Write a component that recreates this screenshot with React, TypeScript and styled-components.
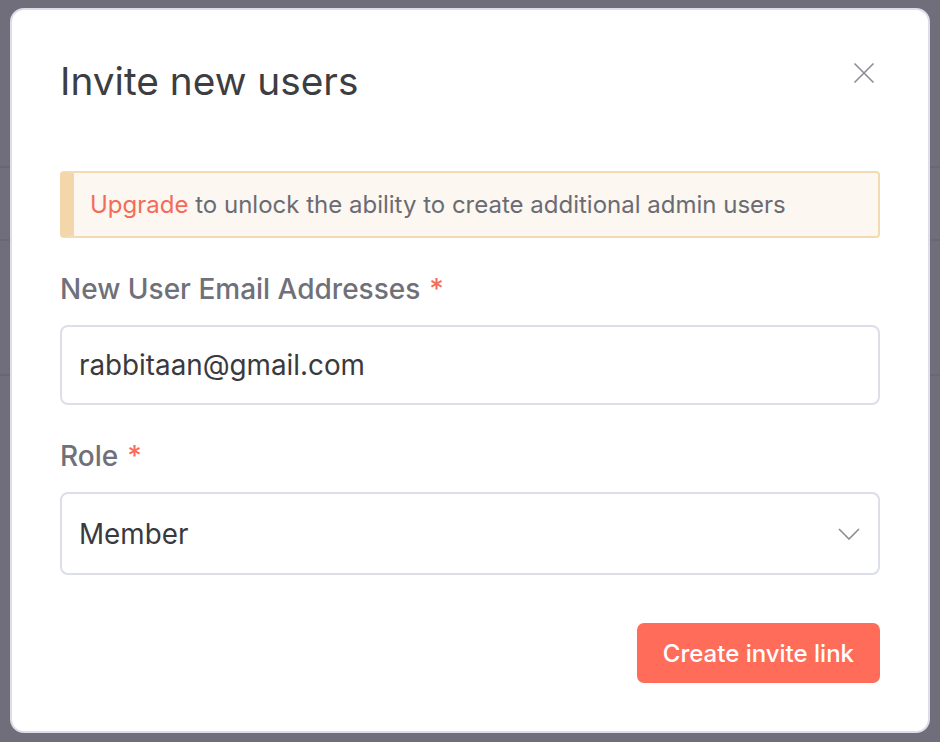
import { createGlobalStyle } from 'styled-components';
import styled from 'styled-components';

const GlobalStyle = createGlobalStyle`
  html, body {
    margin: 0;
    padding: 0;
    background: #716e7c;
  }
  body {
    font-family: Inter, "Noto Sans", sans-serif;
  }
  * {
    box-sizing: border-box;
  }
`;

const Backdrop = styled.div`
  position: relative;
  width: 940px;
  height: 742px;
  padding: 8px 10px;
  background: #716e7c;
  overflow: hidden;
`;

const BackdropLine = styled.div<{ $top: number }>`
  position: absolute;
  left: 0;
  right: 0;
  top: ${({ $top }) => $top}px;
  height: 2px;
  background: #6a6775;
`;

const Modal = styled.div`
  position: relative;
  width: 920px;
  height: 725px;
  background: #ffffff;
  border: 2px solid #dcdde9;
  border-radius: 14px;
  padding: 47px 48px 48px;
  display: flex;
  flex-direction: column;
`;

const Header = styled.div`
  display: flex;
  align-items: flex-start;
  justify-content: space-between;
`;

const Title = styled.h2`
  margin: 0;
  font-size: 38.8px;
  line-height: 48px;
  font-weight: 400;
  color: #3d3d42;
`;

const CloseButton = styled.button`
  margin-top: 4px;
  margin-right: 4px;
  width: 24px;
  height: 24px;
  padding: 0;
  border: none;
  background: transparent;
  display: flex;
  align-items: center;
  justify-content: center;
  cursor: pointer;
`;

const Alert = styled.div`
  margin-top: 66px;
  height: 67px;
  display: flex;
  align-items: center;
  background: #fcf7f0;
  border: 2px solid #f4dab0;
  border-left: 14px solid #f4d6ab;
  border-radius: 4px;
  padding-left: 16px;
  font-size: 24px;
  color: #6b6b74;
`;

const UpgradeLink = styled.span`
  color: #f56b5a;
`;

const Label = styled.label<{ $gap: number }>`
  display: block;
  margin-top: ${({ $gap }) => $gap}px;
  font-size: 28px;
  line-height: 30px;
  font-weight: 500;
  color: #707079;
`;

const Required = styled.span`
  color: #fb6b59;
  margin-left: 9px;
`;

const Field = styled.div<{ $height: number }>`
  margin-top: 21px;
  height: ${({ $height }) => $height}px;
  border: 2px solid #dcdee9;
  border-radius: 8px;
  display: flex;
  align-items: center;
  justify-content: space-between;
  padding: 0 18px 0 17px;
  font-size: 27.8px;
  color: #3a3a3e;
`;

const Footer = styled.div`
  margin-top: auto;
  display: flex;
  justify-content: flex-end;
`;

const PrimaryButton = styled.button`
  height: 60px;
  padding: 0 26px;
  border: none;
  border-radius: 7px;
  background: #ff6d5a;
  color: #ffffff;
  font-family: inherit;
  font-size: 24px;
  font-weight: 500;
  cursor: pointer;
`;

export default function App() {
  return (
    <>
      <GlobalStyle />
      <Backdrop>
        <BackdropLine $top={166} />
        <BackdropLine $top={239} />
        <BackdropLine $top={374} />
        <Modal>
          <Header>
            <Title>Invite new users</Title>
            <CloseButton aria-label="Close">
              <svg width="22" height="22" viewBox="0 0 22 22" fill="none" stroke="#8c8c94" strokeWidth="1.6">
                <path d="M1.5 1.5L20.5 20.5M20.5 1.5L1.5 20.5" />
              </svg>
            </CloseButton>
          </Header>

          <Alert>
            <span>
              <UpgradeLink>Upgrade</UpgradeLink> to unlock the ability to create additional admin users
            </span>
          </Alert>

          <Label $gap={36}>
            New User Email Addresses<Required>*</Required>
          </Label>
          <Field $height={80}>rabbitaan@gmail.com</Field>

          <Label $gap={36}>
            Role<Required>*</Required>
          </Label>
          <Field $height={83}>
            <span>Member</span>
            <svg width="22" height="12" viewBox="0 0 22 12" fill="none" stroke="#8c8c94" strokeWidth="1.6">
              <path d="M1 1L11 11L21 1" />
            </svg>
          </Field>

          <Footer>
            <PrimaryButton>Create invite link</PrimaryButton>
          </Footer>
        </Modal>
      </Backdrop>
    </>
  );
}
